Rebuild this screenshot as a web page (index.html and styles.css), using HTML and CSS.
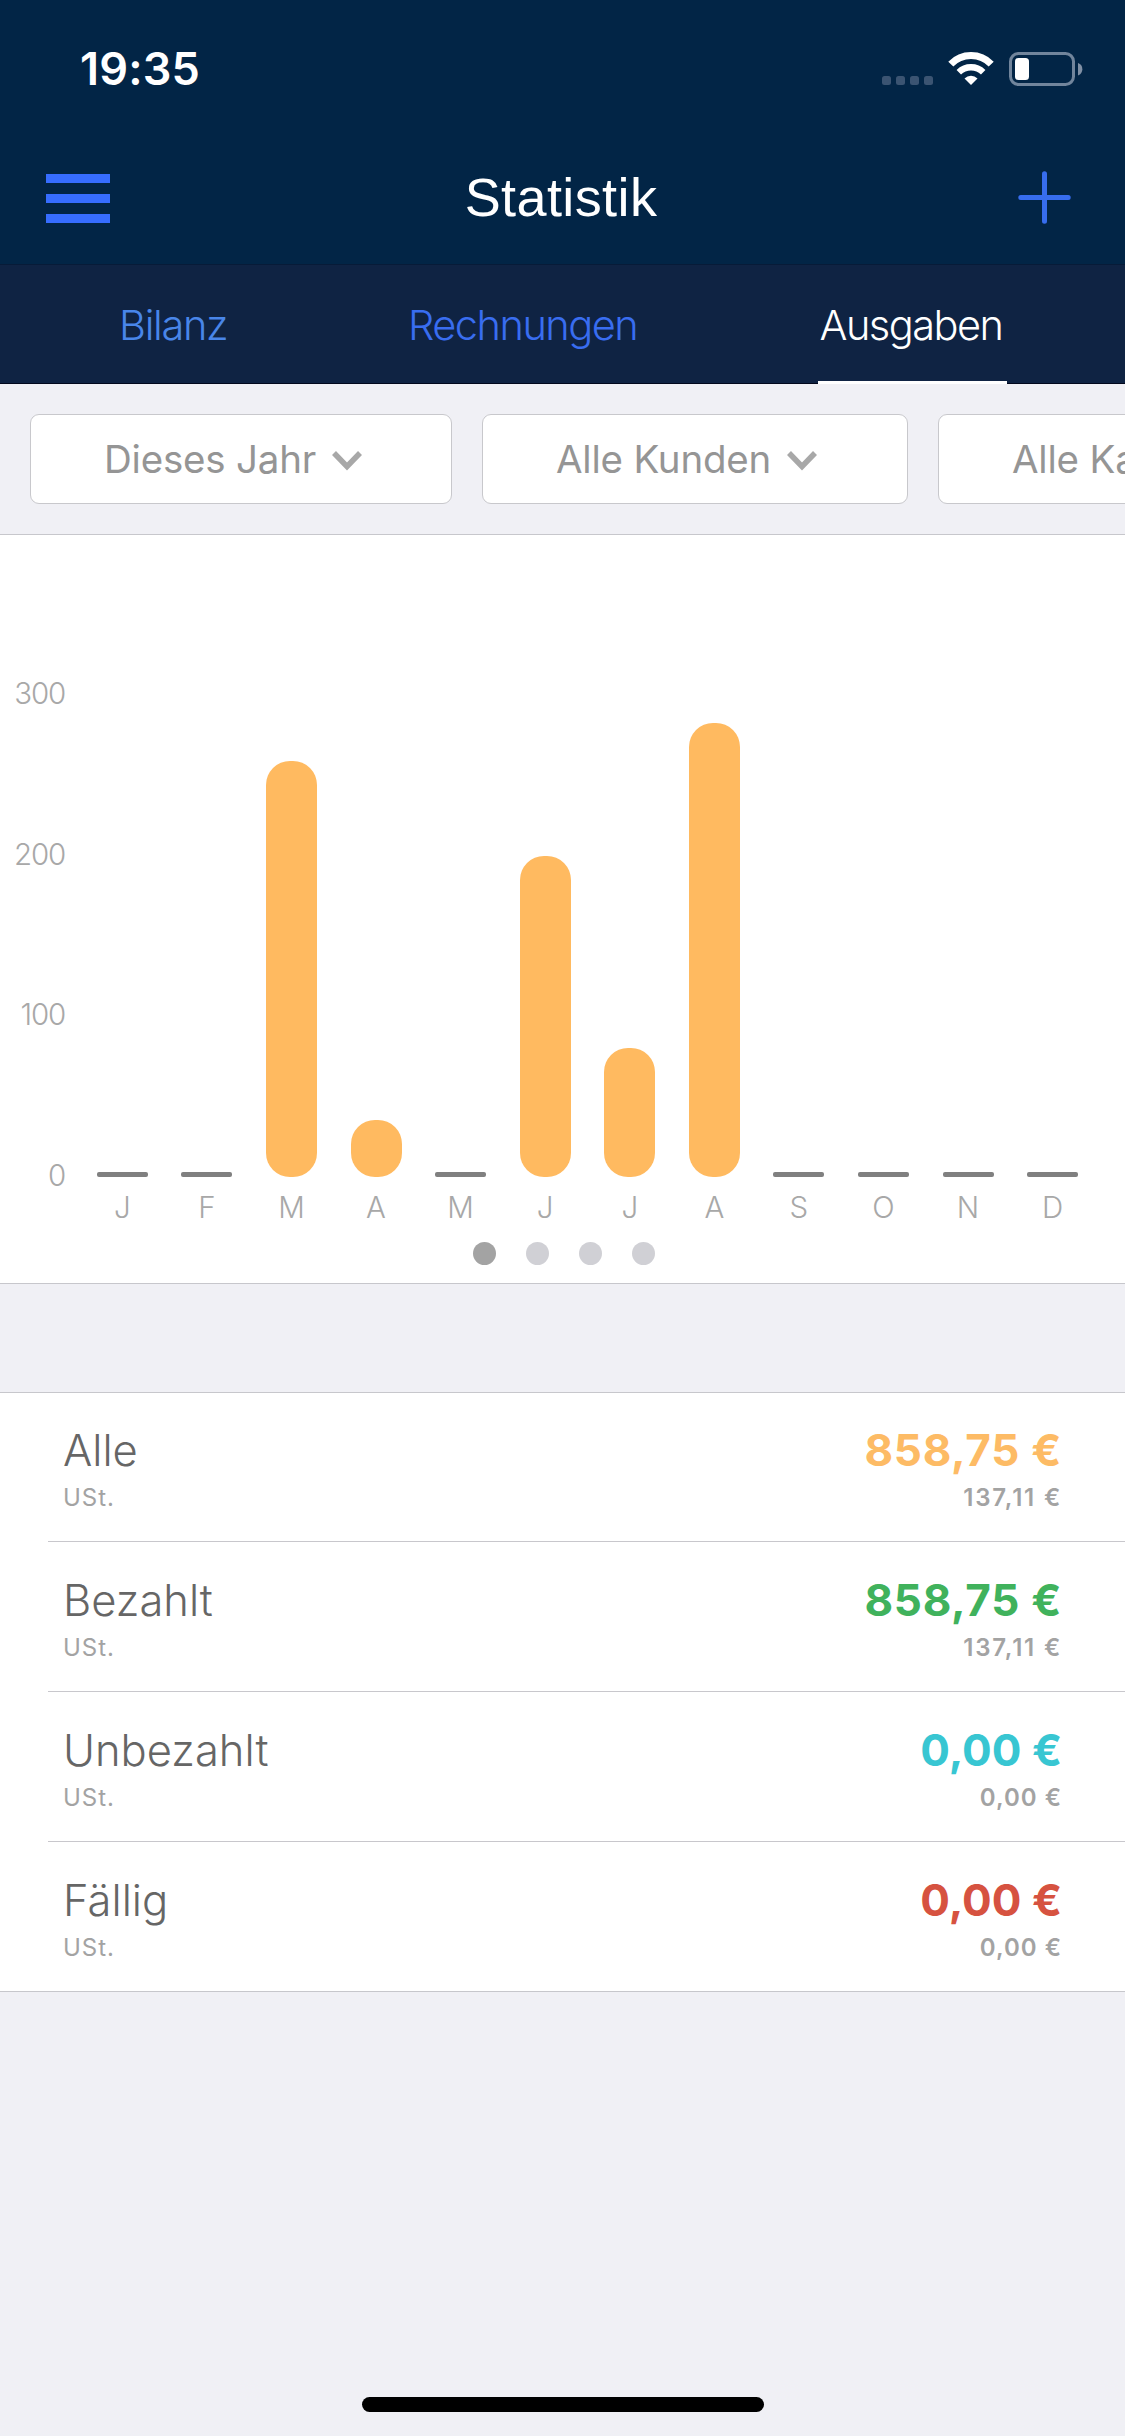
FILE: index.html
```html
<!DOCTYPE html>
<html lang="de">
<head>
<meta charset="utf-8">
<title>Statistik</title>
<link rel="stylesheet" href="styles.css">
</head>
<body>
<div class="app">
  <header class="header">
    <div class="status">
      <span class="clock">19:35</span>
      <svg class="status-icons" width="202" height="36" viewBox="0 0 202 36">
        <g fill="#3b5472">
          <rect x="1" y="25" width="9" height="9" rx="2.5"/>
          <rect x="15" y="25" width="9" height="9" rx="2.5"/>
          <rect x="29" y="25" width="9" height="9" rx="2.5"/>
          <rect x="43" y="25" width="9" height="9" rx="2.5"/>
        </g>
        <g fill="none" stroke="#fff">
          <path d="M69.8 13.2a28 28 0 0 1 40.4 0" stroke-width="7"/>
          <path d="M77.8 21.2a17.5 17.5 0 0 1 24.4 0" stroke-width="6.4"/>
        </g>
        <path d="M90 34l-6.5-6.6a9.5 9.5 0 0 1 13 0z" fill="#fff"/>
        <rect x="129.5" y="2.5" width="63" height="31" rx="8" fill="none" stroke="#71859c" stroke-width="3"/>
        <rect x="134" y="7" width="14" height="22" rx="3.5" fill="#fff"/>
        <path d="M197 12a6.6 6.6 0 0 1 0 12.4z" fill="#8090a5"/>
      </svg>
    </div>
    <div class="navbar">
      <svg class="menu-icon" width="64" height="49" viewBox="0 0 64 49" fill="#376dff"><path d="M0 0h64v9H0zM0 20h64v9H0zM0 40h64v9H0z"/></svg>
      <h1 class="title">Statistik</h1>
      <svg class="plus-icon" width="53" height="53" viewBox="0 0 53 53" fill="none" stroke="#376dee" stroke-width="5" stroke-linecap="round"><path d="M26.5 2.8v47.4M2.8 26.5h47.4"/></svg>
    </div>
  </header>
  <nav class="tabs">
    <a class="tab tab-bilanz">Bilanz</a>
    <a class="tab tab-rechnungen">Rechnungen</a>
    <a class="tab tab-active">Ausgaben</a>
  </nav>
  <div class="filters">
    <div class="filter filter-year"><span>Dieses Jahr</span><svg class="chevron" width="30" height="20" viewBox="0 0 30 20"><path d="M2 2l13 13.500l13-13.500"/></svg></div>
    <div class="filter filter-customer"><span>Alle Kunden</span><svg class="chevron" width="30" height="20" viewBox="0 0 30 20"><path d="M2 2l13 13.500l13-13.500"/></svg></div>
    <div class="filter filter-category"><span>Alle Kategorien</span></div>
  </div>
  <section class="chart">
    <div class="plot">
      <div class="axis"><span>300</span><span>200</span><span>100</span><span>0</span></div>
      <div class="months">
        <div class="month"><div class="slot"><i class="empty"></i></div><span>J</span></div>
        <div class="month"><div class="slot"><i class="empty"></i></div><span>F</span></div>
        <div class="month"><div class="slot"><i class="bar" style="height:415.500px"></i></div><span>M</span></div>
        <div class="month"><div class="slot"><i class="bar" style="height:57px"></i></div><span>A</span></div>
        <div class="month"><div class="slot"><i class="empty"></i></div><span>M</span></div>
        <div class="month"><div class="slot"><i class="bar" style="height:320.500px"></i></div><span>J</span></div>
        <div class="month"><div class="slot"><i class="bar" style="height:128.500px"></i></div><span>J</span></div>
        <div class="month"><div class="slot"><i class="bar" style="height:454px"></i></div><span>A</span></div>
        <div class="month"><div class="slot"><i class="empty"></i></div><span>S</span></div>
        <div class="month"><div class="slot"><i class="empty"></i></div><span>O</span></div>
        <div class="month"><div class="slot"><i class="empty"></i></div><span>N</span></div>
        <div class="month"><div class="slot"><i class="empty"></i></div><span>D</span></div>
      </div>
    </div>
    <div class="pager"><i class="dot dot-on"></i><i class="dot"></i><i class="dot"></i><i class="dot"></i></div>
  </section>
  <section class="totals">
    <div class="row">
      <div class="names"><span class="name">Alle</span><span class="tax">USt.</span></div>
      <div class="values"><span class="amount loose orange">858,75 €</span><span class="tax-amount loose">137,11 €</span></div>
    </div>
    <div class="row">
      <div class="names"><span class="name">Bezahlt</span><span class="tax">USt.</span></div>
      <div class="values"><span class="amount loose green">858,75 €</span><span class="tax-amount loose">137,11 €</span></div>
    </div>
    <div class="row">
      <div class="names"><span class="name">Unbezahlt</span><span class="tax">USt.</span></div>
      <div class="values"><span class="amount cyan">0,00 €</span><span class="tax-amount">0,00 €</span></div>
    </div>
    <div class="row">
      <div class="names"><span class="name">Fällig</span><span class="tax">USt.</span></div>
      <div class="values"><span class="amount red">0,00 €</span><span class="tax-amount">0,00 €</span></div>
    </div>
  </section>
  <div class="home-indicator"></div>
</div>
</body>
</html>
```
FILE: styles.css
```css
* { box-sizing: border-box; }
body { margin: 0; }
.app {
  width: 1125px;
  height: 2436px;
  display: flex;
  flex-direction: column;
  overflow: hidden;
  background: #f0f0f5;
  font-family: Inter, "Liberation Sans", sans-serif;
}
.app > * { flex-shrink: 0; }

.header { height: 264px; background: #022546; }
.status {
  height: 138px;
  display: flex;
  justify-content: space-between;
  align-items: center;
  padding: 0 42px 0 80px;
}
.clock { color: #fff; font-size: 45px; font-weight: 600; line-height: 60px; letter-spacing: 0.2px; }
.navbar {
  height: 120px;
  display: grid;
  grid-template-columns: 64px 1fr 53px;
  align-items: center;
  padding: 0 54px 0 46px;
}
.menu-icon, .plus-icon { display: block; }
.menu-icon { margin-top: 1px; }
.plus-icon { margin-top: -1px; }
.title {
  margin: 0;
  padding: 0 6px 3px 0;
  color: #fff;
  text-align: center;
  font: 400 54px/70px "Liberation Sans", sans-serif;
  letter-spacing: 0.4px;
}

.tabs {
  height: 120px;
  display: flex;
  padding-left: 118px;
  background: #0f2343;
  border-top: 1px solid #071b38;
  border-bottom: 1px solid #02081c;
}
.tab {
  height: 119px;
  font-size: 41.500px;
  font-weight: 300;
  line-height: 120px;
  white-space: nowrap;
}
.tab-bilanz { width: 288px; padding-left: 1px; color: #4986e9; letter-spacing: -1.300px; }
.tab-rechnungen { width: 412px; padding-left: 2px; color: #396df0; letter-spacing: -1.500px; }
.tab-active { width: 189px; padding-right: 3px; text-align: center; color: #fff; letter-spacing: -1.500px; border-bottom: 3px solid #fff; }

.filters {
  height: 151px;
  display: flex;
  gap: 30px;
  padding: 30px 0 0 30px;
  border-bottom: 1px solid #c7c7cc;
}
.filter {
  flex: none;
  height: 90px;
  display: flex;
  align-items: center;
  gap: 16px;
  padding-left: 73px;
  background: #fff;
  border: 1px solid #c8c8cc;
  border-radius: 9px;
  color: #959595;
  font-size: 38.500px;
  line-height: 50px;
  letter-spacing: -0.200px;
  white-space: nowrap;
}
.filter-year { width: 422px; }
.filter-customer { width: 426px; }
.filter-category { width: 480px; }
.chevron { fill: none; stroke: #a8a8a8; stroke-width: 5.500px; margin-top: 4px; }

.chart { height: 749px; padding-top: 138px; background: #fff; border-bottom: 1px solid #c7c7cc; }
.plot { height: 555px; display: flex; gap: 16px; padding-right: 30px; }
.axis {
  width: 64px;
  height: 522px;
  display: flex;
  flex-direction: column;
  justify-content: space-between;
  text-align: right;
}
.axis span, .month span { color: #a8a8a8; font-size: 29.500px; font-weight: 300; line-height: 40px; }
.axis span { letter-spacing: -1.200px; margin-right: -1px; }
.months { flex: 1; display: flex; }
.month { flex: 1; display: flex; flex-direction: column; align-items: center; gap: 10px; }
.slot { height: 503.500px; display: flex; align-items: flex-end; }
.bar { width: 51px; border-radius: 24px; background: #ffba60; }
.empty { width: 51px; height: 4.500px; border-radius: 2px; background: #808080; }
.pager { display: flex; justify-content: center; gap: 30px; margin-top: 14px; padding-left: 2px; }
.dot { width: 23px; height: 23px; border-radius: 50%; background: #d0d0d5; }
.dot-on { background: #a3a3a3; }

.totals {
  margin-top: 108px;
  height: 600px;
  background: #fff;
  border-top: 1px solid #c7c7cc;
  border-bottom: 1px solid #c7c7cc;
}
.row {
  height: 150px;
  display: flex;
  justify-content: space-between;
  margin-left: 48px;
  padding: 28px 63px 0 15px;
  border-bottom: 1px solid #c8c7cc;
}
.row:first-child { height: 149px; padding-top: 27px; }
.row:last-child { border-bottom: 0; }
.names, .values { display: flex; flex-direction: column; }
.values { align-items: flex-end; }
.name { color: #666; font-size: 43.500px; font-weight: 300; line-height: 60px; }
.tax { color: #a3a3a3; font-size: 24px; line-height: 35px; letter-spacing: 1px; }
.amount { font-size: 44px; font-weight: 700; line-height: 60px; }
.tax-amount { color: #a3a3a3; font-size: 24px; font-weight: 600; line-height: 36px; letter-spacing: 1px; }
.amount.loose { letter-spacing: 0.700px; }
.tax-amount.loose { letter-spacing: 1.800px; }
.orange { color: #fdbb65; }
.green { color: #40b25c; }
.cyan { color: #38c6d2; }
.red { color: #d65240; }

.home-indicator { width: 402px; height: 15px; margin: auto auto 24px 362px; border-radius: 8px; background: #000; }
```
